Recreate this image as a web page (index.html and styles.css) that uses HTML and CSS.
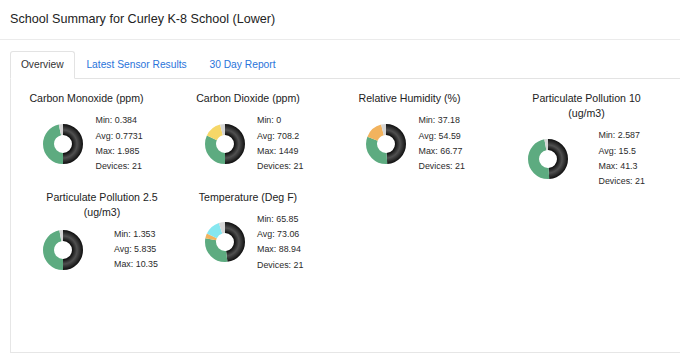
FILE: index.html
```html
<!DOCTYPE html>
<html lang="en">
<head>
<meta charset="utf-8">
<title>School Summary</title>
<link rel="stylesheet" href="styles.css">
</head>
<body>
<svg class="defs" width="0" height="0" aria-hidden="true">
  <defs>
    <radialGradient id="darkShade" gradientUnits="userSpaceOnUse" cx="20" cy="20" r="20">
      <stop offset="0.44" stop-color="#0a0a0a"/>
      <stop offset="0.7" stop-color="#505050"/>
      <stop offset="1" stop-color="#0f0f0f"/>
    </radialGradient>
  </defs>
</svg>
<header class="page-header">
  <h1 class="page-title">School Summary for Curley K-8 School (Lower)</h1>
</header>
<div class="tabs-wrap">
  <ul class="nav-tabs">
    <li><a class="tab active">Overview</a></li>
    <li><a class="tab">Latest Sensor Results</a></li>
    <li><a class="tab">30 Day Report</a></li>
  </ul>
  <div class="tab-panel">
    <div class="chart-grid">
      <div class="chart-card">
        <h2 class="chart-title">Carbon Monoxide (ppm)</h2>
        <div class="chart-body">
          <svg class="donut" viewBox="0 0 40 40" width="40" height="40">
            <g transform="rotate(-90 20 20)">
              <circle class="seg seg-dark" cx="20" cy="20" r="14.5" pathLength="100" stroke-dasharray="50 50" stroke-dashoffset="0"/>
              <circle class="seg seg-green" cx="20" cy="20" r="14.5" pathLength="100" stroke-dasharray="46.5 53.5" stroke-dashoffset="-50"/>
              <circle class="seg seg-gray" cx="20" cy="20" r="14.5" pathLength="100" stroke-dasharray="3.5 96.5" stroke-dashoffset="-96.5"/>
            </g>
          </svg>
          <ul class="stats">
            <li>Min: 0.384</li>
            <li>Avg: 0.7731</li>
            <li>Max: 1.985</li>
            <li>Devices: 21</li>
          </ul>
        </div>
      </div>
      <div class="chart-card">
        <h2 class="chart-title">Carbon Dioxide (ppm)</h2>
        <div class="chart-body">
          <svg class="donut" viewBox="0 0 40 40" width="40" height="40">
            <g transform="rotate(-90 20 20)">
              <circle class="seg seg-dark" cx="20" cy="20" r="14.5" pathLength="100" stroke-dasharray="50 50" stroke-dashoffset="0"/>
              <circle class="seg seg-green" cx="20" cy="20" r="14.5" pathLength="100" stroke-dasharray="32 68" stroke-dashoffset="-50"/>
              <circle class="seg seg-yellow" cx="20" cy="20" r="14.5" pathLength="100" stroke-dasharray="14 86" stroke-dashoffset="-82"/>
              <circle class="seg seg-gray" cx="20" cy="20" r="14.5" pathLength="100" stroke-dasharray="4 96" stroke-dashoffset="-96"/>
            </g>
          </svg>
          <ul class="stats">
            <li>Min: 0</li>
            <li>Avg: 708.2</li>
            <li>Max: 1449</li>
            <li>Devices: 21</li>
          </ul>
        </div>
      </div>
      <div class="chart-card">
        <h2 class="chart-title">Relative Humidity (%)</h2>
        <div class="chart-body">
          <svg class="donut" viewBox="0 0 40 40" width="40" height="40">
            <g transform="rotate(-90 20 20)">
              <circle class="seg seg-dark" cx="20" cy="20" r="14.5" pathLength="100" stroke-dasharray="49 51" stroke-dashoffset="0"/>
              <circle class="seg seg-green" cx="20" cy="20" r="14.5" pathLength="100" stroke-dasharray="32 68" stroke-dashoffset="-49"/>
              <circle class="seg seg-orange" cx="20" cy="20" r="14.5" pathLength="100" stroke-dasharray="15 85" stroke-dashoffset="-81"/>
              <circle class="seg seg-gray" cx="20" cy="20" r="14.5" pathLength="100" stroke-dasharray="4 96" stroke-dashoffset="-96"/>
            </g>
          </svg>
          <ul class="stats">
            <li>Min: 37.18</li>
            <li>Avg: 54.59</li>
            <li>Max: 66.77</li>
            <li>Devices: 21</li>
          </ul>
        </div>
      </div>
      <div class="chart-card chart-card--wide">
        <h2 class="chart-title">Particulate Pollution 10 (ug/m3)</h2>
        <div class="chart-body">
          <svg class="donut" viewBox="0 0 40 40" width="40" height="40">
            <g transform="rotate(-90 20 20)">
              <circle class="seg seg-dark" cx="20" cy="20" r="14.5" pathLength="100" stroke-dasharray="49 51" stroke-dashoffset="0"/>
              <circle class="seg seg-green" cx="20" cy="20" r="14.5" pathLength="100" stroke-dasharray="48 52" stroke-dashoffset="-49"/>
              <circle class="seg seg-gray" cx="20" cy="20" r="14.5" pathLength="100" stroke-dasharray="3 97" stroke-dashoffset="-97"/>
            </g>
          </svg>
          <ul class="stats">
            <li>Min: 2.587</li>
            <li>Avg: 15.5</li>
            <li>Max: 41.3</li>
            <li>Devices: 21</li>
          </ul>
        </div>
      </div>
      <div class="chart-card chart-card--wide">
        <h2 class="chart-title">Particulate Pollution 2.5 (ug/m3)</h2>
        <div class="chart-body">
          <svg class="donut" viewBox="0 0 40 40" width="40" height="40">
            <g transform="rotate(-90 20 20)">
              <circle class="seg seg-dark" cx="20" cy="20" r="14.5" pathLength="100" stroke-dasharray="50 50" stroke-dashoffset="0"/>
              <circle class="seg seg-green" cx="20" cy="20" r="14.5" pathLength="100" stroke-dasharray="47 53" stroke-dashoffset="-50"/>
              <circle class="seg seg-gray" cx="20" cy="20" r="14.5" pathLength="100" stroke-dasharray="3 97" stroke-dashoffset="-97"/>
            </g>
          </svg>
          <ul class="stats">
            <li>Min: 1.353</li>
            <li>Avg: 5.835</li>
            <li>Max: 10.35</li>
          </ul>
        </div>
      </div>
      <div class="chart-card">
        <h2 class="chart-title">Temperature (Deg F)</h2>
        <div class="chart-body">
          <svg class="donut" viewBox="0 0 40 40" width="40" height="40">
            <g transform="rotate(-90 20 20)">
              <circle class="seg seg-dark" cx="20" cy="20" r="14.5" pathLength="100" stroke-dasharray="48 52" stroke-dashoffset="0"/>
              <circle class="seg seg-green" cx="20" cy="20" r="14.5" pathLength="100" stroke-dasharray="30 70" stroke-dashoffset="-48"/>
              <circle class="seg seg-orange" cx="20" cy="20" r="14.5" pathLength="100" stroke-dasharray="4 96" stroke-dashoffset="-78"/>
              <circle class="seg seg-cyan" cx="20" cy="20" r="14.5" pathLength="100" stroke-dasharray="13 87" stroke-dashoffset="-82"/>
              <circle class="seg seg-gray" cx="20" cy="20" r="14.5" pathLength="100" stroke-dasharray="5 95" stroke-dashoffset="-95"/>
            </g>
          </svg>
          <ul class="stats">
            <li>Min: 65.85</li>
            <li>Avg: 73.06</li>
            <li>Max: 88.94</li>
            <li>Devices: 21</li>
          </ul>
        </div>
      </div>
    </div>
  </div>
</div>
</body>
</html>
```

FILE: styles.css
```css
* { box-sizing: border-box; }

html, body {
  margin: 0;
  padding: 0;
  background: #ffffff;
  color: #222529;
  font-family: "Liberation Sans", Arial, sans-serif;
  overflow: hidden;
}

.defs {
  position: absolute;
  width: 0;
  height: 0;
}

.page-header {
  height: 40px;
  padding: 12px 10px 0;
  border-bottom: 1px solid #ebebeb;
}

.page-title {
  margin: 0;
  font-size: 12.6px;
  line-height: 15px;
  font-weight: 400;
  color: #222;
}

.tabs-wrap {
  margin: 11px 0 0 9.5px;
}

.nav-tabs {
  display: flex;
  list-style: none;
  margin: 0;
  padding: 0;
  border-bottom: 1px solid #e3e3e3;
}

.nav-tabs li {
  margin-bottom: -1px;
}

.tab {
  display: block;
  padding: 5.2px 10.4px;
  font-size: 10.25px;
  line-height: 15.6px;
  color: #2a74da;
  border: 1px solid transparent;
  border-top-left-radius: 3px;
  border-top-right-radius: 3px;
  text-decoration: none;
}

.tab.active {
  color: #333;
  background: #fff;
  border-color: #e3e3e3 #e3e3e3 #fff;
}

.tab-panel {
  height: 274px;
  border-left: 1px solid #e6e6e6;
  border-bottom: 1px solid #e6e6e6;
  padding: 12.5px 0 0 10px;
}

.chart-grid {
  display: grid;
  grid-template-columns: repeat(4, 161.5px);
}

.chart-card {
  display: flex;
  flex-direction: column;
}

.chart-title {
  margin: 0 0 7px;
  width: 132px;
  font-size: 10.6px;
  line-height: 15px;
  font-weight: 400;
  text-align: center;
  color: #222;
}

.chart-card--wide .chart-title {
  width: 130px;
  margin-left: 16.5px;
}

.chart-body {
  display: flex;
  align-items: center;
  gap: 12.5px;
  padding-left: 22.5px;
}

.chart-card--wide .chart-body {
  gap: 31px;
}

.donut {
  display: block;
  flex: none;
}

.seg {
  fill: none;
  stroke-width: 11;
}

.seg-dark { stroke: url(#darkShade); }
.seg-green { stroke: #5dab80; }
.seg-gray { stroke: #d6d6d6; }
.seg-yellow { stroke: #f6d768; }
.seg-orange { stroke: #f2b35e; }
.seg-cyan { stroke: #86e7f0; }

.stats {
  list-style: none;
  margin: 0;
  padding: 0;
  font-size: 8.9px;
  line-height: 15.3px;
  color: #2b2b2b;
  white-space: nowrap;
}
```
